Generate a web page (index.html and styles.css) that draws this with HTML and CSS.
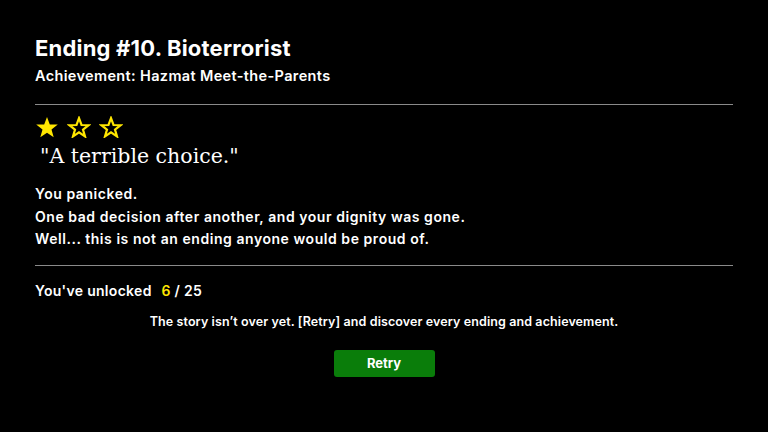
FILE: index.html
```html
<!DOCTYPE html>
<html lang="en">
<head>
    <meta charset="UTF-8">
    <meta name="viewport" content="width=device-width, initial-scale=1.0">
    <title>Ending</title>
    <link rel="stylesheet" href="styles.css">
</head>
<body>
    <div class="ending">
        <h1 class="title">Ending #10. Bioterrorist</h1>
        <h2 class="achievement">Achievement: Hazmat Meet-the-Parents</h2>
        <hr class="divider">
        <div class="stars">
            <svg class="star full" viewBox="0 0 24 22"><polygon points="12,1 14.8,8.4 22.8,8.6 16.5,13.6 18.7,21.2 12,16.8 5.3,21.2 7.5,13.6 1.2,8.6 9.2,8.4"/></svg>
            <svg class="star" viewBox="0 0 24 22"><polygon points="12,2.2 14.5,9 21.6,9.2 16,13.6 18,20.4 12,16.4 6,20.4 8,13.6 2.4,9.2 9.5,9"/></svg>
            <svg class="star" viewBox="0 0 24 22"><polygon points="12,2.2 14.5,9 21.6,9.2 16,13.6 18,20.4 12,16.4 6,20.4 8,13.6 2.4,9.2 9.5,9"/></svg>
        </div>
        <p class="quote">"A terrible choice."</p>
        <div class="story">
            <p>You panicked.</p>
            <p>One bad decision after another, and your dignity was gone.</p>
            <p>Well... this is not an ending anyone would be proud of.</p>
        </div>
        <hr class="divider lower">
        <p class="progress">You've unlocked <span class="count">6</span> / 25</p>
        <p class="hint">The story isn’t over yet. [Retry] and discover every ending and achievement.</p>
        <div class="actions">
            <button class="retry">Retry</button>
        </div>
    </div>
</body>
</html>
```
FILE: styles.css
```css
body {
    margin: 0;
    background: #000;
    color: #fff;
    font-family: 'Inter', sans-serif;
}
.ending {
    padding: 34px 35px 0 35px;
}
.title {
    font-size: 22px;
    font-weight: 700;
    margin: 0;
    line-height: 28px;
    letter-spacing: 0.2px;
}
.achievement {
    font-size: 14.5px;
    font-weight: 600;
    margin: 4px 0 0 0;
    line-height: 20px;
    letter-spacing: 0.35px;
}
.divider {
    border: none;
    border-top: 1px solid #8a8a8a;
    margin: 18px 0 0 0;
}
.divider.lower {
    margin-top: 14px;
}
.stars {
    margin-top: 11px;
    display: flex;
    gap: 8px;
    height: 22px;
}
.star {
    width: 24px;
    height: 22px;
}
.star polygon {
    fill: none;
    stroke: #ffe600;
    stroke-width: 2.2;
    stroke-linejoin: miter;
}
.star.full polygon {
    fill: #ffe600;
    stroke: none;
}
.quote {
    font-family: 'DejaVu Serif', serif;
    font-size: 20.5px;
    margin: 5px 0 0 5px;
    line-height: 26px;
}
.story {
    margin-top: 14px;
}
.story p {
    margin: 0;
    font-size: 14px;
    font-weight: 600;
    line-height: 22.5px;
    letter-spacing: 0.55px;
}
.divider + .progress {
    margin-top: 14px;
}
.progress {
    font-size: 14px;
    font-weight: 600;
    margin: 0;
    line-height: 22px;
    letter-spacing: 0.3px;
}
.count {
    color: #ffe600;
    margin-left: 6px;
}
.hint {
    text-align: center;
    font-size: 12.5px;
    font-weight: 600;
    margin: 11px 0 0 0;
    line-height: 18px;
    letter-spacing: 0.1px;
}
.actions {
    display: flex;
    justify-content: center;
    margin-top: 19px;
}
.retry {
    width: 101px;
    height: 27px;
    background: #0a7d0a;
    color: #fff;
    border: none;
    border-radius: 3px;
    font-family: 'Inter', sans-serif;
    font-size: 13px;
    font-weight: 700;
}
```
